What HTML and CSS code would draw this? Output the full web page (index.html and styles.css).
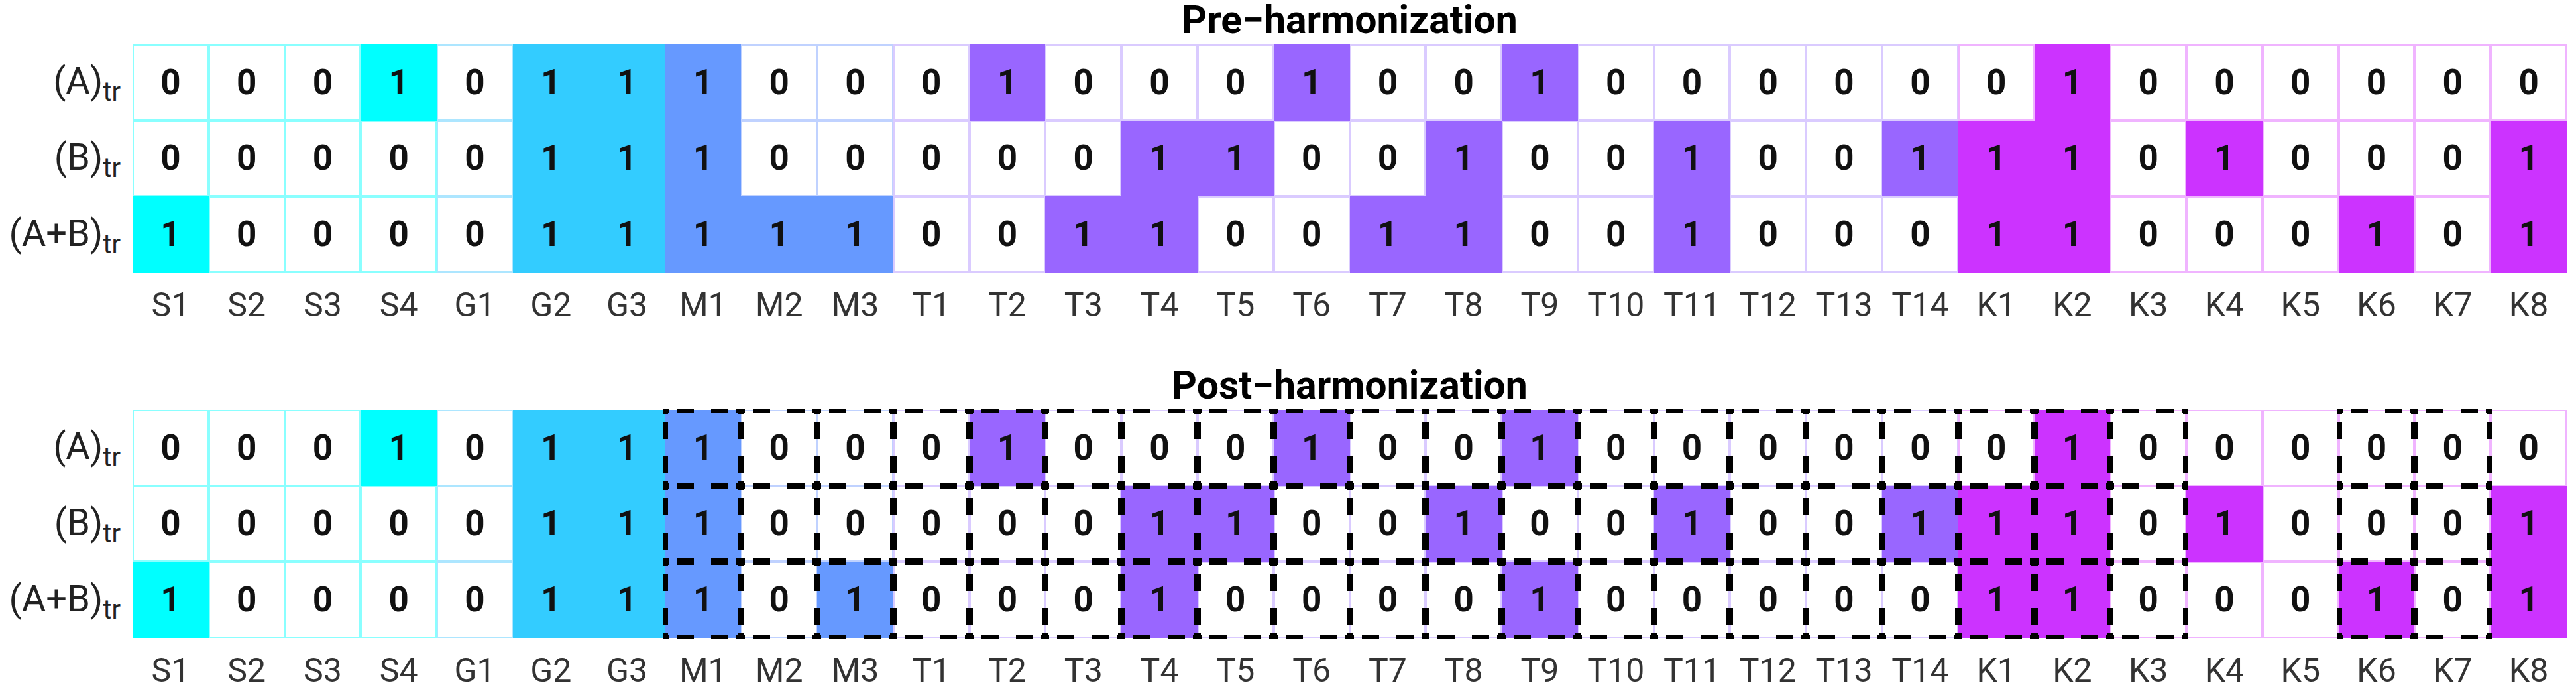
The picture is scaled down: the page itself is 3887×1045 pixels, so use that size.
FILE: index.html
```html
<!DOCTYPE html>
<html>
<head>
<meta charset="utf-8">
<link rel="stylesheet" href="styles.css">
</head>
<body>
<div class="fig">
  <div class="title">Pre−harmonization</div>

  <div class="rl">(A)<span class="sub">tr</span></div>
  <div class="c s">0</div><div class="c s">0</div><div class="c s">0</div><div class="c s on">1</div>
  <div class="c g">0</div><div class="c g on">1</div><div class="c g on">1</div>
  <div class="c m on">1</div><div class="c m">0</div><div class="c m">0</div>
  <div class="c t">0</div><div class="c t on">1</div><div class="c t">0</div><div class="c t">0</div><div class="c t">0</div><div class="c t on">1</div><div class="c t">0</div><div class="c t">0</div><div class="c t on">1</div><div class="c t">0</div><div class="c t">0</div><div class="c t">0</div><div class="c t">0</div><div class="c t">0</div>
  <div class="c k">0</div><div class="c k on">1</div><div class="c k">0</div><div class="c k">0</div><div class="c k">0</div><div class="c k">0</div><div class="c k">0</div><div class="c k">0</div>

  <div class="rl">(B)<span class="sub">tr</span></div>
  <div class="c s">0</div><div class="c s">0</div><div class="c s">0</div><div class="c s">0</div>
  <div class="c g">0</div><div class="c g on">1</div><div class="c g on">1</div>
  <div class="c m on">1</div><div class="c m">0</div><div class="c m">0</div>
  <div class="c t">0</div><div class="c t">0</div><div class="c t">0</div><div class="c t on">1</div><div class="c t on">1</div><div class="c t">0</div><div class="c t">0</div><div class="c t on">1</div><div class="c t">0</div><div class="c t">0</div><div class="c t on">1</div><div class="c t">0</div><div class="c t">0</div><div class="c t on">1</div>
  <div class="c k on">1</div><div class="c k on">1</div><div class="c k">0</div><div class="c k on">1</div><div class="c k">0</div><div class="c k">0</div><div class="c k">0</div><div class="c k on">1</div>

  <div class="rl">(A+B)<span class="sub">tr</span></div>
  <div class="c s on">1</div><div class="c s">0</div><div class="c s">0</div><div class="c s">0</div>
  <div class="c g">0</div><div class="c g on">1</div><div class="c g on">1</div>
  <div class="c m on">1</div><div class="c m on">1</div><div class="c m on">1</div>
  <div class="c t">0</div><div class="c t">0</div><div class="c t on">1</div><div class="c t on">1</div><div class="c t">0</div><div class="c t">0</div><div class="c t on">1</div><div class="c t on">1</div><div class="c t">0</div><div class="c t">0</div><div class="c t on">1</div><div class="c t">0</div><div class="c t">0</div><div class="c t">0</div>
  <div class="c k on">1</div><div class="c k on">1</div><div class="c k">0</div><div class="c k">0</div><div class="c k">0</div><div class="c k on">1</div><div class="c k">0</div><div class="c k on">1</div>

  <div class="cl-sp"></div>
  <div class="cl">S1</div><div class="cl">S2</div><div class="cl">S3</div><div class="cl">S4</div><div class="cl">G1</div><div class="cl">G2</div><div class="cl">G3</div><div class="cl">M1</div><div class="cl">M2</div><div class="cl">M3</div><div class="cl">T1</div><div class="cl">T2</div><div class="cl">T3</div><div class="cl">T4</div><div class="cl">T5</div><div class="cl">T6</div><div class="cl">T7</div><div class="cl">T8</div><div class="cl">T9</div><div class="cl">T10</div><div class="cl">T11</div><div class="cl">T12</div><div class="cl">T13</div><div class="cl">T14</div><div class="cl">K1</div><div class="cl">K2</div><div class="cl">K3</div><div class="cl">K4</div><div class="cl">K5</div><div class="cl">K6</div><div class="cl">K7</div><div class="cl">K8</div>

  <div class="title second">Post−harmonization</div>

  <div class="rl">(A)<span class="sub">tr</span></div>
  <div class="c s">0</div><div class="c s">0</div><div class="c s">0</div><div class="c s on">1</div>
  <div class="c g">0</div><div class="c g on">1</div><div class="c g on">1</div>
  <div class="c m d on">1</div><div class="c m d">0</div><div class="c m d">0</div>
  <div class="c t d">0</div><div class="c t d on">1</div><div class="c t d">0</div><div class="c t d">0</div><div class="c t d">0</div><div class="c t d on">1</div><div class="c t d">0</div><div class="c t d">0</div><div class="c t d on">1</div><div class="c t d">0</div><div class="c t d">0</div><div class="c t d">0</div><div class="c t d">0</div><div class="c t d">0</div>
  <div class="c k d">0</div><div class="c k d on">1</div><div class="c k d">0</div><div class="c k">0</div><div class="c k">0</div><div class="c k d">0</div><div class="c k d">0</div><div class="c k">0</div>

  <div class="rl">(B)<span class="sub">tr</span></div>
  <div class="c s">0</div><div class="c s">0</div><div class="c s">0</div><div class="c s">0</div>
  <div class="c g">0</div><div class="c g on">1</div><div class="c g on">1</div>
  <div class="c m d on">1</div><div class="c m d">0</div><div class="c m d">0</div>
  <div class="c t d">0</div><div class="c t d">0</div><div class="c t d">0</div><div class="c t d on">1</div><div class="c t d on">1</div><div class="c t d">0</div><div class="c t d">0</div><div class="c t d on">1</div><div class="c t d">0</div><div class="c t d">0</div><div class="c t d on">1</div><div class="c t d">0</div><div class="c t d">0</div><div class="c t d on">1</div>
  <div class="c k d on">1</div><div class="c k d on">1</div><div class="c k d">0</div><div class="c k on">1</div><div class="c k">0</div><div class="c k d">0</div><div class="c k d">0</div><div class="c k on">1</div>

  <div class="rl">(A+B)<span class="sub">tr</span></div>
  <div class="c s on">1</div><div class="c s">0</div><div class="c s">0</div><div class="c s">0</div>
  <div class="c g">0</div><div class="c g on">1</div><div class="c g on">1</div>
  <div class="c m d on">1</div><div class="c m d">0</div><div class="c m d on">1</div>
  <div class="c t d">0</div><div class="c t d">0</div><div class="c t d">0</div><div class="c t d on">1</div><div class="c t d">0</div><div class="c t d">0</div><div class="c t d">0</div><div class="c t d">0</div><div class="c t d on">1</div><div class="c t d">0</div><div class="c t d">0</div><div class="c t d">0</div><div class="c t d">0</div><div class="c t d">0</div>
  <div class="c k d on">1</div><div class="c k d on">1</div><div class="c k d">0</div><div class="c k">0</div><div class="c k">0</div><div class="c k d on">1</div><div class="c k d">0</div><div class="c k on">1</div>

  <div class="cl-sp"></div>
  <div class="cl">S1</div><div class="cl">S2</div><div class="cl">S3</div><div class="cl">S4</div><div class="cl">G1</div><div class="cl">G2</div><div class="cl">G3</div><div class="cl">M1</div><div class="cl">M2</div><div class="cl">M3</div><div class="cl">T1</div><div class="cl">T2</div><div class="cl">T3</div><div class="cl">T4</div><div class="cl">T5</div><div class="cl">T6</div><div class="cl">T7</div><div class="cl">T8</div><div class="cl">T9</div><div class="cl">T10</div><div class="cl">T11</div><div class="cl">T12</div><div class="cl">T13</div><div class="cl">T14</div><div class="cl">K1</div><div class="cl">K2</div><div class="cl">K3</div><div class="cl">K4</div><div class="cl">K5</div><div class="cl">K6</div><div class="cl">K7</div><div class="cl">K8</div>
</div>
</body>
</html>
```

FILE: styles.css
```css
html, body {
  margin: 0;
  padding: 0;
  background: #ffffff;
}

.fig {
  width: 3873px;
  display: grid;
  grid-template-columns: 200px repeat(32, 1fr);
  grid-auto-rows: auto;
  font-family: Roboto, "Liberation Sans", sans-serif;
}

.title {
  grid-column: 2 / -1;
  text-align: center;
  font-weight: 700;
  font-size: 59px;
  line-height: 59px;
  height: 67px;
  color: #000;
}

.title.second {
  margin-top: 66px;
}

.rl {
  grid-column: 1;
  height: 114.67px;
  display: flex;
  align-items: center;
  justify-content: flex-end;
  padding-right: 18px;
  padding-bottom: 4px;
  box-sizing: border-box;
  font-size: 56px;
  color: #222;
  line-height: 1;
}

.rl .sub {
  font-size: 40px;
  position: relative;
  top: 17px;
}

.c {
  position: relative;
  height: 114.67px;
  box-sizing: border-box;
  border-style: solid;
  border-width: 2px;
  border-color: var(--ln);
  background: #fff;
  display: flex;
  align-items: center;
  justify-content: center;
  font-weight: 700;
  font-size: 53px;
  line-height: 1;
  color: #111;
}

.c.on {
  background: var(--f);
  border-color: var(--f);
}

.s { --f: #00ffff; --ln: #8affff; }
.g { --f: #33ccff; --ln: #ade6ff; }
.m { --f: #6699ff; --ln: #c0d2ff; }
.t { --f: #9966ff; --ln: #dacbff; }
.k { --f: #cc33ff; --ln: #f0b4ff; }

.c.d::after {
  content: "";
  position: absolute;
  left: -4px;
  top: -4px;
  right: -4px;
  bottom: -4px;
  pointer-events: none;
  background:
    linear-gradient(90deg, #000 0 8px, transparent 8px 20px, #000 20px 46px, transparent 46px 72px, #000 72px 98px, transparent 98px 110px, #000 110px) top left / 100% 7px no-repeat,
    linear-gradient(90deg, #000 0 8px, transparent 8px 20px, #000 20px 46px, transparent 46px 72px, #000 72px 98px, transparent 98px 110px, #000 110px) bottom left / 100% 7px no-repeat,
    linear-gradient(180deg, #000 0 8px, transparent 8px 20px, #000 20px 46px, transparent 46px 72px, #000 72px 98px, transparent 98px 110px, #000 110px) top left / 7px 100% no-repeat,
    linear-gradient(180deg, #000 0 8px, transparent 8px 20px, #000 20px 46px, transparent 46px 72px, #000 72px 98px, transparent 98px 110px, #000 110px) top right / 7px 100% no-repeat;
  z-index: 1;
}

.cl-sp {
  grid-column: 1;
}

.cl {
  margin-top: 24px;
  text-align: center;
  font-size: 50px;
  line-height: 50px;
  color: #333;
}
```
